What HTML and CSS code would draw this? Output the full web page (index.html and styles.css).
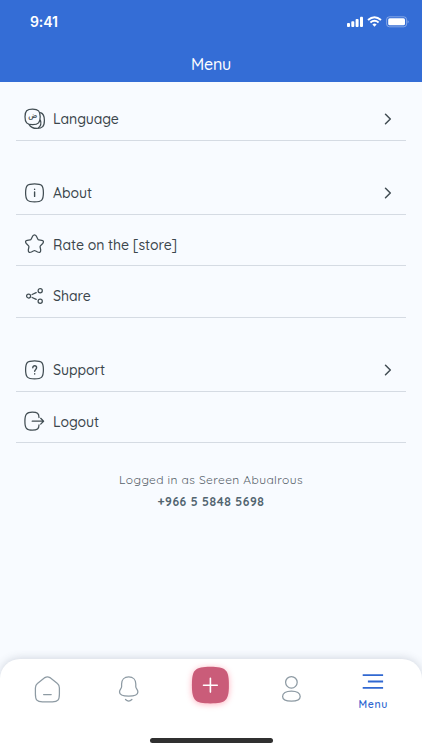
FILE: index.html
```html
<!DOCTYPE html>
<html lang="en">
<head>
<meta charset="utf-8">
<meta name="viewport" content="width=device-width, initial-scale=1">
<title>Menu</title>
<link rel="stylesheet" href="styles.css">
</head>
<body>
<div class="screen">
  <header class="header">
    <div class="status">
      <span class="time">9:41</span>
      <svg class="signals" width="62" height="14" viewBox="0 0 62 14" fill="#fff">
        <rect x="0" y="8" width="3" height="4" rx=".9"/><rect x="4.3" y="6.2" width="3" height="5.8" rx=".9"/><rect x="8.6" y="4" width="3" height="8" rx=".9"/><rect x="13" y="1.8" width="3" height="10.2" rx=".9"/>
        <g fill="none" stroke="#fff" stroke-width="1.9"><path d="M21 5Q27.5-.7 34 5"/><path d="M23.4 7.5Q27.5 4 31.6 7.5"/></g>
        <path d="M25.4 9.4Q27.5 7.8 29.6 9.4L27.5 11.8Z"/>
        <rect x="39.6" y="1.8" width="20" height="10" rx="2.8" fill="none" stroke="#fff" stroke-opacity=".38"/>
        <rect x="41.2" y="3.3" width="16.8" height="7" rx="1.5"/>
        <path d="M60.6 5.2Q62.8 6.8 60.6 8.6Z" fill-opacity=".45"/>
      </svg>
    </div>
    <h1 class="title">Menu</h1>
  </header>

  <main class="content">
    <ul class="group">
      <li class="row">
        <svg class="icon" viewBox="0 0 22 22"><path d="M8.6 1.1C14.4 1.1 16.2 3.1 16.2 8.8S14.4 16.6 8.6 16.6 1 14.6 1 8.8 2.9 1.1 8.6 1.1Z"/><path d="M16.6 4.7C19.4 5.8 20.4 8.2 20.4 12.2C20.4 18.4 18.4 20.4 12.9 20.4C9 20.4 6.6 19.4 5.2 16.6"/><path d="M16.4 12.2C17.5 15.5 16.4 18.2 14.6 19.8"/><text class="letter" x="8.8" y="9.6" text-anchor="middle">ض</text></svg>
        <span class="label">Language</span>
        <svg class="chevron" viewBox="0 0 8 12"><path d="M1.5 1.2L6.3 6 1.5 10.8"/></svg>
      </li>
    </ul>
    <ul class="group">
      <li class="row">
        <svg class="icon" viewBox="0 0 22 22"><path d="M10.6 1.8C17.8 1.8 19.4 3.4 19.4 10.8S17.8 19.8 10.6 19.8 1.6 18.2 1.6 10.8 3.3 1.8 10.6 1.8Z"/><path d="M10.6 10V14.4M10.6 7.2V7.4" stroke-width="1.4"/></svg>
        <span class="label">About</span>
        <svg class="chevron" viewBox="0 0 8 12"><path d="M1.5 1.2L6.3 6 1.5 10.8"/></svg>
      </li>
      <li class="row">
        <svg class="icon" viewBox="0 0 22 22"><path d="M8.6 3.2Q10.5 .6 12.4 3.2L13.9 6.2Q14.2 6.8 14.9 6.9L17.8 7.3Q20.6 8 18.7 10.5L16.4 12.9Q16 13.4 16.1 14L16.7 16.9Q16.8 20.4 13.6 19L11.2 17.8Q10.5 17.4 9.8 17.8L7.4 19Q4.2 20.4 4.3 16.9L4.9 14Q5 13.4 4.6 12.9L2.3 10.5Q.4 8 3.2 7.3L6.1 6.9Q6.8 6.8 7.1 6.2Z"/></svg>
        <span class="label">Rate on the [store]</span>
      </li>
      <li class="row">
        <svg class="icon" viewBox="0 0 22 22"><circle cx="4.6" cy="11" r="2"/><circle cx="16.2" cy="5.7" r="2.1"/><circle cx="16.2" cy="16.2" r="2.1"/><path d="M8.1 9.5L12.2 7.6M8.1 12.5L12.2 14.4"/></svg>
        <span class="label">Share</span>
      </li>
    </ul>
    <ul class="group">
      <li class="row">
        <svg class="icon" viewBox="0 0 22 22"><path d="M10.6 1.8C17.8 1.8 19.4 3.4 19.4 10.8S17.8 19.8 10.6 19.8 1.6 18.2 1.6 10.8 3.3 1.8 10.6 1.8Z"/><path d="M8.8 8.7C8.8 6.1 12.6 6.2 12.6 8.7C12.6 10.4 10.7 10.4 10.7 12.2M10.7 14.8V15" stroke-width="1.4"/></svg>
        <span class="label">Support</span>
        <svg class="chevron" viewBox="0 0 8 12"><path d="M1.5 1.2L6.3 6 1.5 10.8"/></svg>
      </li>
      <li class="row">
        <svg class="icon" viewBox="0 0 22 22"><path d="M15 7.5C14.9 3.5 13.5 2.2 8.2 2.2C2.6 2.2 .9 4.1 .9 11.2S2.6 20.2 8.2 20.2C13.5 20.2 14.9 18.8 15 14.9"/><path d="M8.2 11.2H19.5M16.7 8.3L19.6 11.2L16.7 14.1"/></svg>
        <span class="label">Logout</span>
      </li>
    </ul>
    <div class="account">
      <p class="user">Logged in as Sereen Abualrous</p>
      <p class="phone">+966 5 5848 5698</p>
    </div>
  </main>

  <nav class="tabs">
    <div class="tab-list">
      <a class="tab"><svg class="tab-icon" width="28" height="30" viewBox="0.6 0 28 30"><path d="M11.5 2.6Q14 1 16.5 2.6L24 8.5Q26 10 26 13V19C26 25 24.5 26.8 19 26.8H9C3.5 26.8 2 25 2 19V13Q2 10 4 8.5ZM10.2 19.5H17.8"/></svg></a>
      <a class="tab"><svg class="tab-icon" width="22" height="30" viewBox="0.3 0 22 30"><path d="M11 1.9C6.5 1.9 3.9 5 3.9 9V11.8C3.9 13.5 1.8 14.5 1.8 17C1.8 19.8 5.5 21.2 11 21.2S20.2 19.8 20.2 17C20.2 14.5 18.1 13.5 18.1 11.8V9C18.1 5 15.5 1.9 11 1.9ZM7.8 24.5Q11 27.6 14.2 24.5"/></svg></a>
      <a class="tab add"><svg class="add-icon" width="44" height="44" viewBox="-0.4 0 44 44"><path d="M22 3.7C37.5 3.7 40.5 6.7 40.5 22.1S37.5 40.5 22 40.5 3.5 37.5 3.5 22.1 6.5 3.7 22 3.7Z" fill="#ca5c79"/><path d="M22 15.3V29.1M15.1 22.2H28.9" fill="none" stroke="#fff" stroke-width="1.6" stroke-linecap="round"/></svg></a>
      <a class="tab"><svg class="tab-icon" width="22" height="30" viewBox="0.6 0 22 30"><circle cx="11" cy="7.3" r="5.8"/><path d="M11 16.1C16.5 16.1 19.8 18.4 19.8 21.5C19.8 24.9 17 26.1 11 26.1S2.2 24.9 2.2 21.5C2.2 18.4 5.5 16.1 11 16.1Z"/></svg></a>
      <a class="tab current"><svg width="22" height="18" viewBox="0 0 22 18"><path d="M.7 2.2H21.1M5.9 8.5H21.1M.7 14.9H21.1" fill="none" stroke="#3168d1" stroke-width="1.8"/></svg><span class="tab-label">Menu</span></a>
    </div>
    <div class="home-bar"></div>
  </nav>
</div>
</body>
</html>
```
FILE: styles.css
```css
* { box-sizing: border-box; }
body { margin: 0; font-family: Quicksand, Lato, "Noto Sans", sans-serif; color: #3b464c; background: #f8fbff; }
h1, p, ul { margin: 0; padding: 0; }
.screen { width: 422px; height: 750px; overflow: hidden; display: flex; flex-direction: column; background: #f8fbff; }
.header { height: 82px; flex: none; background: #346dd6; color: #fff; }
.status { height: 43px; padding: 0 13px 0 30px; display: flex; align-items: center; justify-content: space-between; }
.time { font: 600 14px/20px Inter, sans-serif; letter-spacing: -.1px; }
.title { font-size: 16px; line-height: 42px; font-weight: 500; letter-spacing: -.2px; text-align: center; }
.content { flex: 1; padding: 15px 16px 0; }
.group { list-style: none; margin-bottom: 29.7px; }
.row { height: 44.2px; padding: 1px 14px 0 8px; display: flex; align-items: center; border-bottom: 1px solid #d5dbe3; }
.row + .row { margin-top: 7.4px; }
.group + .group { margin-top: -.2px; }
.icon { width: 22px; height: 22px; margin: 0 7px 0 0; flex: none; }
.icon, .chevron { fill: none; stroke: #414d53; stroke-width: 1.25; stroke-linecap: round; stroke-linejoin: round; }
.letter { font: 7.5px "DejaVu Sans", sans-serif; fill: #414d53; stroke: #414d53; stroke-width: .2; }
.label { font-size: 14px; line-height: 20px; font-weight: 500; letter-spacing: -.06px; white-space: nowrap; padding-top: 1px; }
.group:first-child .label { padding-top: 0; }
.chevron { width: 8px; height: 12px; margin-left: auto; stroke-width: 1.5; }
.account { margin-top: -3.5px; text-align: center; font-size: 12px; line-height: 22px; color: #566169; }
.user { letter-spacing: .4px; }
.phone { font-weight: 700; letter-spacing: .55px; color: #526570; }
.tabs { height: 91px; flex: none; border-radius: 20px 20px 0 0; background: #fff; box-shadow: 0 -1px 8px rgba(65, 75, 100, .2); }
.tab-list { height: 81px; padding: 0 8px 0 7px; display: grid; grid-template-columns: repeat(5, 1fr); }
.tab { display: flex; flex-direction: column; align-items: center; padding-top: 16px; }
.tab-icon { fill: none; stroke: #8d9aa3; stroke-width: 1.25; stroke-linecap: round; stroke-linejoin: round; }
.add { padding-top: 4px; }
.add-icon { overflow: visible; filter: drop-shadow(0 1px 3px rgba(255, 80, 110, .45)); }
.current { padding-top: 14px; color: #3168d1; }
.tab-label { font-size: 10.5px; line-height: 16px; margin-top: 5px; font-weight: 600; letter-spacing: .6px; }
.home-bar { width: 123px; height: 4.5px; margin: -2px auto 0; border-radius: 3px; background: #303030; }
```
